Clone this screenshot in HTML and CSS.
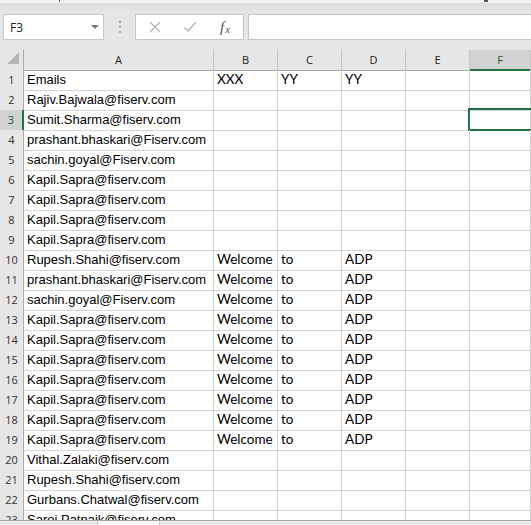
FILE: index.html
```html
<!DOCTYPE html>
<html>
<head>
<meta charset="utf-8">
<link rel="stylesheet" href="styles.css">
</head>
<body>
<div class="top-strip"><span class="mark m1"></span><span class="mark m2"></span></div>
<div class="toolbar">
  <div class="namebox"><span>F3</span><span class="caret"></span></div>
  <div class="grip"><i></i><i></i><i></i></div>
  <div class="fxbox">
    <svg class="ic" width="14" height="14" viewBox="0 0 14 14"><path d="M2 2L12 12M12 2L2 12" stroke="#b4b4b4" stroke-width="1.3" fill="none"/></svg>
    <svg class="ic" width="14" height="14" viewBox="0 0 14 14"><path d="M1.5 7.5L5 11L12.5 2.5" stroke="#b4b4b4" stroke-width="1.4" fill="none"/></svg>
    <span class="fx">f<span class="fxs">x</span></span>
  </div>
  <div class="formula"></div>
</div>
<div class="gap"></div>
<div class="sheet">
  <div class="row head">
    <div class="corner"><svg width="13" height="13" viewBox="0 0 13 13"><path d="M12 0V12H0Z" fill="#b6b6b6"/></svg></div>
    <div class="ch">A</div><div class="ch">B</div><div class="ch">C</div><div class="ch">D</div><div class="ch">E</div><div class="ch sel">F</div>
  </div>
  <div class="row"><div class="rh">1</div><div class="c a">Emails</div><div class="c b">XXX</div><div class="c b">YY</div><div class="c b">YY</div><div class="c"></div><div class="c"></div></div>
  <div class="row"><div class="rh">2</div><div class="c a">Rajiv.Bajwala@fiserv.com</div><div class="c"></div><div class="c"></div><div class="c"></div><div class="c"></div><div class="c"></div></div>
  <div class="row"><div class="rh sel">3</div><div class="c a">Sumit.Sharma@fiserv.com</div><div class="c"></div><div class="c"></div><div class="c"></div><div class="c"></div><div class="c active"></div></div>
  <div class="row"><div class="rh">4</div><div class="c a">prashant.bhaskari@Fiserv.com</div><div class="c"></div><div class="c"></div><div class="c"></div><div class="c"></div><div class="c"></div></div>
  <div class="row"><div class="rh">5</div><div class="c a">sachin.goyal@Fiserv.com</div><div class="c"></div><div class="c"></div><div class="c"></div><div class="c"></div><div class="c"></div></div>
  <div class="row"><div class="rh">6</div><div class="c a">Kapil.Sapra@fiserv.com</div><div class="c"></div><div class="c"></div><div class="c"></div><div class="c"></div><div class="c"></div></div>
  <div class="row"><div class="rh">7</div><div class="c a">Kapil.Sapra@fiserv.com</div><div class="c"></div><div class="c"></div><div class="c"></div><div class="c"></div><div class="c"></div></div>
  <div class="row"><div class="rh">8</div><div class="c a">Kapil.Sapra@fiserv.com</div><div class="c"></div><div class="c"></div><div class="c"></div><div class="c"></div><div class="c"></div></div>
  <div class="row"><div class="rh">9</div><div class="c a">Kapil.Sapra@fiserv.com</div><div class="c"></div><div class="c"></div><div class="c"></div><div class="c"></div><div class="c"></div></div>
  <div class="row"><div class="rh">10</div><div class="c a">Rupesh.Shahi@fiserv.com</div><div class="c b">Welcome</div><div class="c b">to</div><div class="c b">ADP</div><div class="c"></div><div class="c"></div></div>
  <div class="row"><div class="rh">11</div><div class="c a">prashant.bhaskari@Fiserv.com</div><div class="c b">Welcome</div><div class="c b">to</div><div class="c b">ADP</div><div class="c"></div><div class="c"></div></div>
  <div class="row"><div class="rh">12</div><div class="c a">sachin.goyal@Fiserv.com</div><div class="c b">Welcome</div><div class="c b">to</div><div class="c b">ADP</div><div class="c"></div><div class="c"></div></div>
  <div class="row"><div class="rh">13</div><div class="c a">Kapil.Sapra@fiserv.com</div><div class="c b">Welcome</div><div class="c b">to</div><div class="c b">ADP</div><div class="c"></div><div class="c"></div></div>
  <div class="row"><div class="rh">14</div><div class="c a">Kapil.Sapra@fiserv.com</div><div class="c b">Welcome</div><div class="c b">to</div><div class="c b">ADP</div><div class="c"></div><div class="c"></div></div>
  <div class="row"><div class="rh">15</div><div class="c a">Kapil.Sapra@fiserv.com</div><div class="c b">Welcome</div><div class="c b">to</div><div class="c b">ADP</div><div class="c"></div><div class="c"></div></div>
  <div class="row"><div class="rh">16</div><div class="c a">Kapil.Sapra@fiserv.com</div><div class="c b">Welcome</div><div class="c b">to</div><div class="c b">ADP</div><div class="c"></div><div class="c"></div></div>
  <div class="row"><div class="rh">17</div><div class="c a">Kapil.Sapra@fiserv.com</div><div class="c b">Welcome</div><div class="c b">to</div><div class="c b">ADP</div><div class="c"></div><div class="c"></div></div>
  <div class="row"><div class="rh">18</div><div class="c a">Kapil.Sapra@fiserv.com</div><div class="c b">Welcome</div><div class="c b">to</div><div class="c b">ADP</div><div class="c"></div><div class="c"></div></div>
  <div class="row"><div class="rh">19</div><div class="c a">Kapil.Sapra@fiserv.com</div><div class="c b">Welcome</div><div class="c b">to</div><div class="c b">ADP</div><div class="c"></div><div class="c"></div></div>
  <div class="row"><div class="rh">20</div><div class="c a">Vithal.Zalaki@fiserv.com</div><div class="c"></div><div class="c"></div><div class="c"></div><div class="c"></div><div class="c"></div></div>
  <div class="row"><div class="rh">21</div><div class="c a">Rupesh.Shahi@fiserv.com</div><div class="c"></div><div class="c"></div><div class="c"></div><div class="c"></div><div class="c"></div></div>
  <div class="row"><div class="rh">22</div><div class="c a">Gurbans.Chatwal@fiserv.com</div><div class="c"></div><div class="c"></div><div class="c"></div><div class="c"></div><div class="c"></div></div>
  <div class="row"><div class="rh">23</div><div class="c a">Saroj.Patnaik@fiserv.com</div><div class="c"></div><div class="c"></div><div class="c"></div><div class="c"></div><div class="c"></div></div>
</div>
<div class="hscroll"><div class="tab"></div></div>
</body>
</html>
```
FILE: styles.css
```css
* { box-sizing: border-box; }
html, body { margin: 0; padding: 0; }
body {
  width: 531px;
  height: 525px;
  overflow: hidden;
  background: #e6e6e6;
  font-family: "Liberation Sans", Arial, sans-serif;
}
.top-strip {
  height: 3px;
  background: #f2f1f0;
  position: relative;
}
.mark {
  position: absolute;
  top: 0;
  width: 2px;
  height: 2px;
  background: #555;
}
.m1 { left: 59px; width: 1px; }
.m2 { left: 484px; width: 4px; }
.toolbar {
  height: 37px;
  padding-top: 11px;
  padding-left: 3px;
  display: flex;
  align-items: flex-start;
  background: linear-gradient(#dcdbda 0px, #e6e6e6 9px, #e6e6e6 100%);
}
.namebox {
  width: 101px;
  height: 26px;
  background: #fff;
  border: 1px solid #c6c6c6;
  display: flex;
  align-items: center;
  justify-content: space-between;
  padding: 0 4px 0 6px;
  font-family: "Open Sans", sans-serif;
  font-size: 12px;
  color: #222;
}
.caret {
  width: 0; height: 0;
  border-left: 4px solid transparent;
  border-right: 4px solid transparent;
  border-top: 4px solid #7a7a7a;
}
.grip {
  width: 31px;
  height: 26px;
  display: flex;
  flex-direction: column;
  align-items: center;
  justify-content: center;
  gap: 3px;
}
.grip i {
  display: block;
  width: 2px;
  height: 2px;
  background: #a8a8a8;
}
.fxbox {
  width: 109px;
  height: 26px;
  background: #fff;
  border: 1px solid #c6c6c6;
  display: flex;
  align-items: center;
  padding-left: 12px;
  gap: 21px;
}
.fx {
  font-family: "Liberation Serif", serif;
  font-style: italic;
  font-size: 15px;
  line-height: 16px;
  color: #555;
  margin-left: 2px;
}
.fxs {
  font-size: 11px;
  position: relative;
  top: 1px;
  margin-left: 1px;
}
.formula {
  flex: 1;
  margin-left: 4px;
  height: 26px;
  background: #fdfdfd;
  border: 1px solid #c6c6c6;
  border-right: none;
}
.gap { height: 10px; }
.sheet {
  height: 470px;
  overflow: hidden;
  background: #fff;
}
.row {
  display: grid;
  grid-template-columns: 24px 190px 64px 64px 64px 64px 61px;
  height: 20px;
}
.c {
  border-right: 1px solid #d4d4d4;
  border-bottom: 1px solid #d4d4d4;
  padding-left: 3px;
  font-size: 13px;
  line-height: 19px;
  color: #000;
  white-space: nowrap;
  position: relative;
}
.c.b {
  font-family: "Lato", sans-serif;
  font-size: 13.5px;
}
.c.active::after {
  content: "";
  position: absolute;
  left: -2px;
  top: -2px;
  right: -10px;
  bottom: -1px;
  border: 2px solid #217346;
}
.head { background: #e6e6e6; }
.corner {
  border-right: 1px solid #ababab;
  border-bottom: 1px solid #ababab;
  background: #e6e6e6;
  display: flex;
  justify-content: flex-end;
  align-items: flex-end;
  padding: 0 3px 5px 0;
}
.corner svg { display: block; }
.ch {
  background: #e6e6e6;
  border-right: 1px solid #c4c4c4;
  border-bottom: 1px solid #ababab;
  text-align: center;
  font-family: "Open Sans", sans-serif;
  font-size: 11px;
  line-height: 19px;
  color: #222;
}
.ch.sel {
  background: #d2d2d2;
  border-bottom: 2px solid #217346;
  color: #1d5a36;
}
.rh {
  background: #e6e6e6;
  border-right: 1px solid #ababab;
  border-bottom: 1px solid #cfcfcf;
  text-align: center;
  font-family: "Open Sans", sans-serif;
  font-size: 11px;
  line-height: 20px;
  color: #333;
}
.rh.sel {
  background: #d2d2d2;
  border-right: 2px solid #217346;
  color: #1d5a36;
}
.hscroll {
  height: 5px;
  border-top: 1px solid #a6a6a6;
  background: #e9e9e9;
  padding-left: 97px;
}
.tab {
  width: 63px;
  height: 4px;
  background: #f7f7f7;
  border-left: 1px solid #c8c8c8;
  border-right: 1px solid #c8c8c8;
}
```
